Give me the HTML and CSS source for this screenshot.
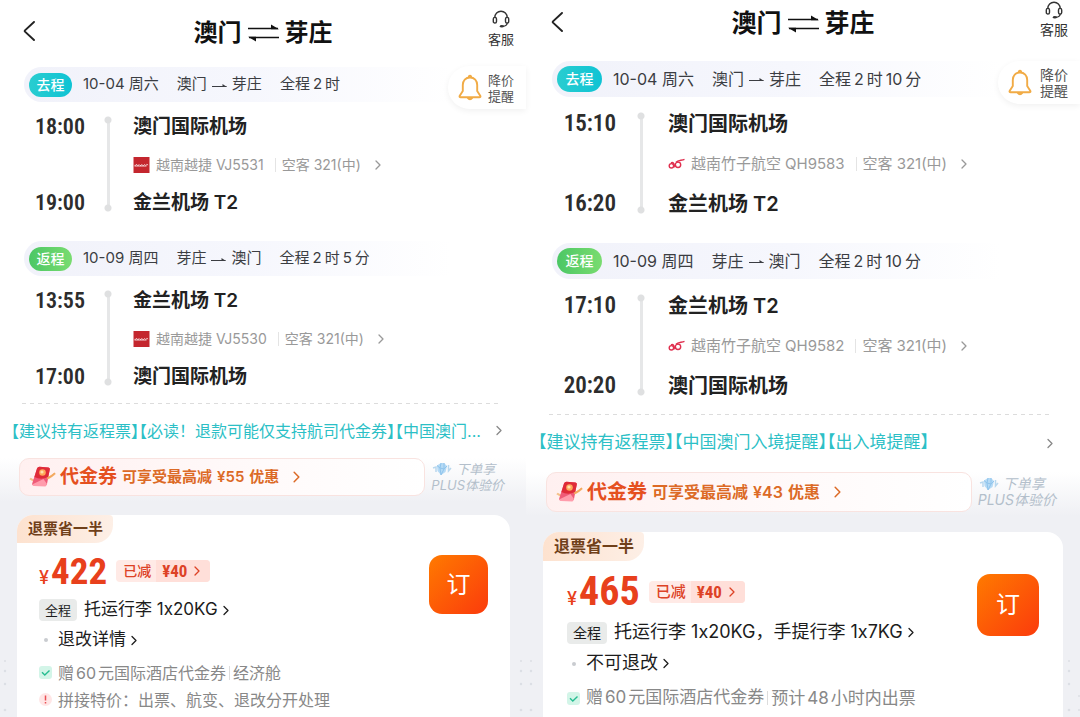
FILE: index.html
```html
<!DOCTYPE html>
<html lang="zh-CN">
<head>
<meta charset="utf-8">
<meta name="viewport" content="width=device-width, initial-scale=1">
<title>澳门 ⇌ 芽庄</title>
<link rel="stylesheet" href="styles.css">
</head>
<body>
<svg class="symbols" aria-hidden="true">
  <symbol id="back" viewBox="0 0 12 20"><path d="M11 1 2 9.300Q1.400 10 2 10.700L11 19" fill="none" stroke="currentColor" stroke-width="1.900" stroke-linecap="round"/></symbol>
  <symbol id="chev" viewBox="0 0 6 10"><path d="M1 1l4 4-4 4" fill="none" stroke="currentColor" stroke-width="1.300" stroke-linecap="round" stroke-linejoin="round"/></symbol>
  <symbol id="swap" viewBox="0 0 31 18"><path d="M0 4.500H30M1 13.500H31" fill="none" stroke="currentColor" stroke-width="1.700"/><path d="M23 .5 31 5.300H23ZM8 17.500 0 12.700H8Z" fill="currentColor"/></symbol>
  <symbol id="arrow" viewBox="0 0 15 6"><path d="M0 4.500H14.500" stroke="currentColor" stroke-width="1"/><path d="M10.500 2 15 5H10.500Z" fill="currentColor"/></symbol>
  <symbol id="headset" viewBox="0 0 18 18"><g fill="none" stroke="currentColor" stroke-width="1.400"><path d="M2.800 7.600V7.500a6.200 6.200 0 0 1 12.400 0v.1"/><rect x="1.300" y="7.400" width="3.200" height="5.600" rx="1.600"/><rect x="13.500" y="7.400" width="3.200" height="5.600" rx="1.600"/><path d="M15.200 13c-.3 2-1.900 3.200-4.200 3.300"/></g><ellipse cx="9.800" cy="16.200" rx="2" ry="1.300" fill="currentColor"/></symbol>
  <symbol id="bell" viewBox="0 0 24 26"><g fill="none" stroke="#f1ab45" stroke-width="1.900" stroke-linejoin="round"><path d="M12 3C7.600 3 4.800 6.200 4.800 10.500V16.500L1.600 21.500Q1.200 22.800 2.600 22.800H21.400Q22.800 22.800 22.400 21.500L19.200 16.500V10.500C19.200 6.200 16.400 3 12 3Z"/><path d="M9.600 23.200q2.400 3 4.800 0M10.800 3q0-1.800 1.200-1.800T13.200 3"/></g></symbol>
  <symbol id="vietjet" viewBox="0 0 16 16"><path d="M0 0h16v16H0z" fill="#c4262e"/><path d="M1 8.300h1.500l.6-1 .7 1.200h1.200l.5-1 1 1h1.200l.6-1.100.8 1.100h1.200l.7-1 .8.800h1l.5-1 1.300.7M1 9.100h12" stroke="#fff" stroke-width=".8" fill="none" opacity=".85"/></symbol>
  <symbol id="bamboo" viewBox="0 0 17 12"><g fill="none" stroke="#e0304f" stroke-width="1.400"><circle cx="3.400" cy="7.800" r="2.200"/><circle cx="10" cy="6.800" r="2.700"/><path d="M3 4.800C6 3 7 8.500 5.800 9.400M8 4.200C10 2.200 13 2.600 16.500 1.400M4.800 5.400q1.800 2 3.200 3"/></g></symbol>
  <symbol id="gift" viewBox="0 0 27 22"><path d="M1 12.500C7 18 20 13 26 7.500" fill="none" stroke="#f5c08a" stroke-width="2"/><path d="M8 2.500Q8.600.8 10.500.8L19.500 1.500Q21.300 1.800 20.800 3.600L18 18Q17.600 20 15.500 20L4.500 19.500Q2.500 19.300 3.200 17.500Z" fill="#ef5b78"/><path d="M8 2.500Q8.600.8 10.500.8L19.500 1.500Q21.300 1.800 20.800 3.600L19.200 11Q12 14.500 5.400 11Z" fill="#df2b38"/><circle cx="13.500" cy="6.500" r="3.300" fill="#ffa95a"/><circle cx="13" cy="6" r="1.600" fill="#ffe2b0"/><path d="M3 18.500 14.500 13l3.500 5-1.500 2.500L5 20Z" fill="#ff9cac"/><path d="M18 12.500q5-2 8-5.500" fill="none" stroke="#f3a85e" stroke-width="1.600"/></symbol>
  <symbol id="gem" viewBox="0 0 20 14"><path d="M5 3.500 9 1h3l3 3-1.500 6L9 13 5.500 9Z" fill="#b5daf5"/><path d="M9 1 8 6l1 7 3-6V1M5 3.500 8 6l4 1 3-3" fill="none" stroke="#8fc4ec"/><path d="M1 6l3-1v5M16.500 3v6l2.500-3" fill="none" stroke="#b9d8ee" stroke-width="1.500"/></symbol>
  <symbol id="check" viewBox="0 0 13 13"><rect width="13" height="13" rx="3" fill="#d3f5e8"/><path d="M3 6.300 5.800 9 10.500 4.500" fill="none" stroke="#27bd91" stroke-width="1.400"/></symbol>
  <symbol id="warn" viewBox="0 0 13 13"><circle cx="6.500" cy="6.500" r="6.500" fill="#ffe6e6"/><path d="M6.500 2.500v5M6.500 9v1.500" stroke="#e94f54" stroke-width="1.500"/></symbol>
  <symbol id="dots" viewBox="0 0 16 60"><g fill="#dcdfe5"><circle cx="5" cy="4" r="1"/><circle cx="5" cy="14" r="1.200"/><circle cx="5" cy="27" r="1.200"/><circle cx="15" cy="39" r="1"/><circle cx="5" cy="53" r="1.300"/><circle cx="15" cy="53" r="1"/></g></symbol>
</svg>

<main class="compare">
  <section class="pane pane-a">
    <header class="top">
      <button class="back" aria-label="返回"><svg><use href="#back"/></svg></button>
      <h1 class="title">澳门<svg><use href="#swap"/></svg>芽庄</h1>
      <button class="service"><svg><use href="#headset"/></svg><span>客服</span></button>
    </header>
    <button class="remind"><svg><use href="#bell"/></svg><span>降价<br>提醒</span></button>

    <div class="bar"><b class="pill go">去程</b><span>10-04 周六</span><span class="od">澳门<svg><use href="#arrow"/></svg>芽庄</span><span>全程<i class="num">2</i>时</span></div>
    <div class="route">
      <time class="time">18:00</time><div class="rail"></div><div class="port">澳门国际机场</div>
      <a class="flight" href="#"><svg class="logo"><use href="#vietjet"/></svg><span>越南越捷<i class="num">VJ5531</i></span><span class="plane">空客<i class="num">321(中)</i></span><svg class="chev"><use href="#chev"/></svg></a>
      <time class="time">19:00</time><div class="port">金兰机场 T2</div>
    </div>

    <div class="bar"><b class="pill return">返程</b><span>10-09 周四</span><span class="od">芽庄<svg><use href="#arrow"/></svg>澳门</span><span>全程<i class="num">2</i>时<i class="num">5</i>分</span></div>
    <div class="route last">
      <time class="time">13:55</time><div class="rail"></div><div class="port">金兰机场 T2</div>
      <a class="flight" href="#"><svg class="logo"><use href="#vietjet"/></svg><span>越南越捷<i class="num">VJ5530</i></span><span class="plane">空客<i class="num">321(中)</i></span><svg class="chev"><use href="#chev"/></svg></a>
      <time class="time">17:00</time><div class="port">澳门国际机场</div>
    </div>

    <a class="notice" href="#"><span><i>【</i>建议持有返程票<i>】【</i>必读！退款可能仅支持航司代金券<i>】【</i>中国澳门...</span><svg class="chev"><use href="#chev"/></svg></a>

    <div class="offers">
      <div class="promo">
        <a class="voucher" href="#"><svg class="gift"><use href="#gift"/></svg><strong>代金券</strong><span>可享受最高减<i class="num">¥55</i>优惠</span><svg class="chev"><use href="#chev"/></svg></a>
        <p class="plus"><span class="plus-top"><svg><use href="#gem"/></svg>下单享</span><span>PLUS体验价</span></p>
      </div>
      <article class="card">
        <span class="tag">退票省一半</span>
        <div class="body">
          <div class="detail">
            <div class="price-row"><span class="price"><small>¥</small>422</span><button class="cut"><span>已减</span><b>¥40<svg class="chev"><use href="#chev"/></svg></b></button></div>
            <a class="line" href="#"><span class="chip">全程</span>托运行李 1x20KG<svg class="chev"><use href="#chev"/></svg></a>
            <a class="line" href="#"><span class="dot"></span>退改详情<svg class="chev"><use href="#chev"/></svg></a>
            <ul class="notes">
              <li><svg><use href="#check"/></svg><span>赠<i class="num">60</i>元国际酒店代金券</span><span class="sep">经济舱</span></li>
              <li><svg><use href="#warn"/></svg><span>拼接特价：出票、航变、退改分开处理</span></li>
            </ul>
          </div>
          <button class="book">订</button>
        </div>
      </article>
      <svg class="dots dots-l" aria-hidden="true"><use href="#dots"/></svg>
      <svg class="dots dots-r" aria-hidden="true"><use href="#dots"/></svg>
    </div>
  </section>

  <section class="pane pane-b">
    <header class="top">
      <button class="back" aria-label="返回"><svg><use href="#back"/></svg></button>
      <h1 class="title">澳门<svg><use href="#swap"/></svg>芽庄</h1>
      <button class="service"><svg><use href="#headset"/></svg><span>客服</span></button>
    </header>
    <button class="remind"><svg><use href="#bell"/></svg><span>降价<br>提醒</span></button>

    <div class="bar"><b class="pill go">去程</b><span>10-04 周六</span><span class="od">澳门<svg><use href="#arrow"/></svg>芽庄</span><span>全程<i class="num">2</i>时<i class="num">10</i>分</span></div>
    <div class="route">
      <time class="time">15:10</time><div class="rail"></div><div class="port">澳门国际机场</div>
      <a class="flight" href="#"><svg class="logo"><use href="#bamboo"/></svg><span>越南竹子航空<i class="num">QH9583</i></span><span class="plane">空客<i class="num">321(中)</i></span><svg class="chev"><use href="#chev"/></svg></a>
      <time class="time">16:20</time><div class="port">金兰机场 T2</div>
    </div>

    <div class="bar"><b class="pill return">返程</b><span>10-09 周四</span><span class="od">芽庄<svg><use href="#arrow"/></svg>澳门</span><span>全程<i class="num">2</i>时<i class="num">10</i>分</span></div>
    <div class="route last">
      <time class="time">17:10</time><div class="rail"></div><div class="port">金兰机场 T2</div>
      <a class="flight" href="#"><svg class="logo"><use href="#bamboo"/></svg><span>越南竹子航空<i class="num">QH9582</i></span><span class="plane">空客<i class="num">321(中)</i></span><svg class="chev"><use href="#chev"/></svg></a>
      <time class="time">20:20</time><div class="port">澳门国际机场</div>
    </div>

    <a class="notice" href="#"><span><i>【</i>建议持有返程票<i>】【</i>中国澳门入境提醒<i>】【</i>出入境提醒<i>】</i></span><svg class="chev"><use href="#chev"/></svg></a>

    <div class="offers">
      <div class="promo">
        <a class="voucher" href="#"><svg class="gift"><use href="#gift"/></svg><strong>代金券</strong><span>可享受最高减<i class="num">¥43</i>优惠</span><svg class="chev"><use href="#chev"/></svg></a>
        <p class="plus"><span class="plus-top"><svg><use href="#gem"/></svg>下单享</span><span>PLUS体验价</span></p>
      </div>
      <article class="card">
        <span class="tag">退票省一半</span>
        <div class="body">
          <div class="detail">
            <div class="price-row"><span class="price"><small>¥</small>465</span><button class="cut"><span>已减</span><b>¥40<svg class="chev"><use href="#chev"/></svg></b></button></div>
            <a class="line" href="#"><span class="chip">全程</span>托运行李 1x20KG，手提行李 1x7KG<svg class="chev"><use href="#chev"/></svg></a>
            <a class="line" href="#"><span class="dot"></span>不可退改<svg class="chev"><use href="#chev"/></svg></a>
            <ul class="notes">
              <li><svg><use href="#check"/></svg><span>赠<i class="num">60</i>元国际酒店代金券</span><span class="sep">预计<i class="num">48</i>小时内出票</span></li>
            </ul>
          </div>
          <button class="book">订</button>
        </div>
      </article>
      <svg class="dots dots-l" aria-hidden="true"><use href="#dots"/></svg>
      <svg class="dots dots-r" aria-hidden="true"><use href="#dots"/></svg>
    </div>
  </section>
</main>
</body>
</html>
```

FILE: styles.css
```css
* { box-sizing: border-box; }
body {
  margin: 0;
  background: #fff;
  color: #222;
  font-family: Inter, "Noto Sans CJK SC", sans-serif;
  line-height: 1.25;
}
h1, p, ul { margin: 0; padding: 0; }
ul { list-style: none; }
a { color: inherit; text-decoration: none; }
i { font-style: normal; }
button { margin: 0; padding: 0; border: 0; background: none; color: inherit; font: inherit; cursor: pointer; }
svg { display: block; flex: none; }
.symbols { position: absolute; width: 0; height: 0; }

.compare {
  display: grid;
  grid-template-columns: minmax(0, 526fr) minmax(0, 554fr);
  min-height: 100vh;
}

.pane {
  position: relative;
  display: flex;
  flex-direction: column;
  white-space: nowrap;
}
.pane-a {
  --top-pad: 9px; --top-h: 67px; --back-x: 11px; --title: 24px;
  --remind-y: 66px; --remind-w: 78px; --remind-gap: 6px; --small: 13px;
  --bar-h: 35px; --bar-x: 24px; --bar-font: 15px; --bar-gap: 18px; --pill-w: 43px; --pill-h: 24px;
  --row: 38px; --route-pad: 6px; --last-pad: 7px; --time-w: 85px; --rail-w: 46px;
  --time: 22px; --port: 19px; --flight: 14px;
  --dash-l: 22px; --dash-r: 24px; --notice-h: 55px; --notice: 16px;
  --promo-l: 19px; --promo-r: 22px; --promo-h: 38px; --voucher: 15px; --strong: 19px;
  --card-gap: 19px; --card-r: 16px; --inset: 22px; --tag-h: 28px; --tag: 15px;
  --price-top: 8px; --price-h: 40px; --price: 37px; --line-h: 30px; --line: 17px;
  --notes-top: 4px; --note-h: 27px; --note: 16px; --book: 59px; --book-top: 12px; --cut: 14px;
}
.pane-b {
  --top-pad: 0px; --top-h: 61px; --back-x: 13px; --title: 25px;
  --remind-y: 61px; --remind-w: 82px; --remind-gap: 8px; --small: 14px;
  --bar-h: 36px; --bar-x: 26px; --bar-font: 16px; --bar-gap: 18px; --pill-w: 45px; --pill-h: 26px;
  --row: 40px; --route-pad: 7px; --last-pad: 8px; --time-w: 90px; --rail-w: 50px;
  --time: 23px; --port: 20px; --flight: 15px;
  --dash-l: 23px; --dash-r: 27px; --notice-h: 58px; --notice: 17px;
  --promo-l: 20px; --promo-r: 24px; --promo-h: 40px; --voucher: 16px; --strong: 20px;
  --card-gap: 20px; --card-r: 17px; --inset: 24px; --tag-h: 29px; --tag: 16px;
  --price-top: 10px; --price-h: 42px; --price: 40px; --line-h: 31px; --line: 18px;
  --notes-top: 5px; --note-h: 28px; --note: 17px; --book: 62px; --book-top: 13px; --cut: 15px;
}

.num { margin: 0 3px; }

.top {
  display: grid;
  grid-template-columns: 1fr auto 1fr;
  align-items: start;
  height: var(--top-h);
  padding: var(--top-pad) 12px 0;
}
.back { justify-self: start; height: 44px; margin-left: var(--back-x); }
.back svg { width: 12px; height: 20px; }
.title {
  display: flex;
  align-items: center;
  gap: 6px;
  height: 48px;
  color: #111;
  font-size: var(--title);
  font-weight: 700;
}
.title svg { width: 31px; height: 18px; }
.service {
  justify-self: end;
  display: flex;
  flex-direction: column;
  align-items: center;
  font-size: var(--small);
  line-height: 20px;
  color: #333;
}
.service svg { width: 18px; height: 20px; }

.remind {
  position: absolute;
  top: var(--remind-y);
  right: 0;
  display: flex;
  align-items: center;
  gap: var(--remind-gap);
  width: var(--remind-w);
  height: 43px;
  padding-left: 10px;
  border-radius: 22px 0 0 22px;
  background: #fff;
  box-shadow: 0 2px 6px #0000000f;
  color: #555;
  font-size: var(--small);
  line-height: 16px;
  text-align: left;
}
.remind svg { width: 24px; height: 27px; }

.bar {
  display: flex;
  align-items: center;
  gap: var(--bar-gap);
  height: var(--bar-h);
  margin-left: var(--bar-x);
  padding-left: 5px;
  border-radius: 18px 0 0 18px;
  background: linear-gradient(90deg, #f1f2fa, #f6f7fd 45%, #fff 85%);
  color: #3b3d42;
  font-size: var(--bar-font);
}
.pill {
  width: var(--pill-w);
  height: var(--pill-h);
  margin-right: -7px;
  border-radius: 13px;
  color: #fff;
  font-size: 14px;
  font-weight: 500;
  line-height: var(--pill-h);
  text-align: center;
}
.go { background: linear-gradient(90deg, #29cdd0, #0fc3d4); }
.return { background: linear-gradient(90deg, #4cc765, #79dc70); }
.od { display: flex; align-items: center; gap: 5px; }
.od svg { width: 15px; height: 6px; }

.route {
  display: grid;
  grid-template-columns: var(--time-w) var(--rail-w) 1fr;
  grid-template-rows: repeat(3, var(--row));
  align-items: center;
  padding: var(--route-pad) 0 19px;
}
.route.last { padding-bottom: var(--last-pad); }
.time {
  grid-column: 1;
  color: #2d2d2d;
  font-family: "Roboto Condensed", Roboto, sans-serif;
  font-size: var(--time);
  font-weight: 600;
  text-align: right;
}
.rail {
  grid-column: 2;
  grid-row: 1 / 4;
  align-self: stretch;
  justify-self: center;
  width: 8px;
  margin: 8px 0 10px;
  background:
    radial-gradient(circle at 4px 4px, #dfe0e1 3px, #dfe0e100 4px) top / 8px 8px no-repeat,
    radial-gradient(circle at 4px 4px, #dfe0e1 3px, #dfe0e100 4px) bottom / 8px 8px no-repeat,
    linear-gradient(#e6e7e8, #e6e7e8) center / 3px 88% no-repeat;
}
.port { grid-column: 3; color: #222; font-size: var(--port); font-weight: 600; padding-left: 2px; }
.flight {
  grid-column: 3;
  display: flex;
  align-items: center;
  gap: 6px;
  padding-left: 2px;
  color: #999;
  font-size: var(--flight);
}
.logo { width: 17px; height: 16px; }
.flight .num { margin: 0 2px 0 4px; }
.plane { border-left: 1px solid #e4e4e4; margin-left: 3px; padding-left: 6px; line-height: 14px; }
.flight .chev { margin-left: 6px; }
.chev { width: 6px; height: 10px; }

.notice {
  display: flex;
  align-items: center;
  justify-content: space-between;
  height: var(--notice-h);
  margin: 0 var(--dash-r) 0 var(--dash-l);
  background: repeating-linear-gradient(90deg, #dcdcdc 0 4px, #fff 4px 8px) top / 100% 1px no-repeat;
  color: #2cbfc6;
  font-size: var(--notice);
}
.notice span { margin-left: -11px; text-spacing-trim: space-all; }
.notice i { font-feature-settings: "halt"; }
.notice .chev { color: #888; width: 6px; height: 11px; }

.offers {
  position: relative;
  flex: 1;
  display: flex;
  flex-direction: column;
  background: linear-gradient(#fff, #eff0f4 44px);
}
.promo {
  display: flex;
  align-items: center;
  gap: 6px;
  height: var(--promo-h);
  padding: 0 var(--promo-r) 0 var(--promo-l);
}
.voucher {
  flex: 1;
  display: flex;
  align-items: center;
  height: 100%;
  padding-left: 9px;
  border: 1px solid #f9e3e0;
  border-radius: 10px;
  background: linear-gradient(90deg, #fff0f0, #fffafa 60%, #fff);
  color: #dc6a26;
  font-size: var(--voucher);
  font-weight: 600;
}
.gift { width: 27px; height: 22px; }
.voucher strong { margin: 0 5px 0 4px; color: #e5501f; font-size: var(--strong); font-weight: 700; }
.voucher .num { margin: 0 5px; }
.voucher .chev { width: 7px; height: 12px; margin-left: 14px; }
.plus {
  display: flex;
  flex-direction: column;
  color: #b3bfcb;
  font-size: var(--small);
  font-style: italic;
  line-height: 16px;
}
.plus-top { display: flex; align-items: center; gap: 3px; }
.plus-top svg { width: 22px; height: 14px; }

.card {
  flex: 1;
  margin: var(--card-gap) var(--card-r) 0 17px;
  border-radius: 16px 16px 0 0;
  background: #fff;
}
.tag {
  display: block;
  width: fit-content;
  height: var(--tag-h);
  padding: 0 10px 0 11px;
  border-radius: 16px 4px 18px 0;
  background: linear-gradient(90deg, #fde2cf, #fdefe6);
  color: #70401a;
  font-size: var(--tag);
  font-weight: 700;
  line-height: var(--tag-h);
}
.body { display: flex; padding: 0 var(--inset); }
.detail { flex: 1; min-width: 0; }
.price-row {
  display: flex;
  align-items: center;
  gap: 9px;
  height: var(--price-h);
  margin: var(--price-top) 0 4px;
}
.price {
  color: #e8401c;
  font-family: "Roboto Condensed", Roboto, sans-serif;
  font-size: var(--price);
  font-weight: 700;
  line-height: 1;
}
.price small { margin-right: 2px; font-family: Inter, sans-serif; font-size: 18px; font-weight: 500; }
.cut {
  display: flex;
  height: 22px;
  border-radius: 4px;
  overflow: hidden;
  background: #ffeae6;
  color: #dd4226;
  font-size: var(--cut);
  line-height: 22px;
}
.cut span { padding: 0 5px 0 7px; font-weight: 500; }
.cut b {
  display: flex;
  align-items: center;
  gap: 7px;
  padding: 0 10px 0 6px;
  background: #ffdfd9;
  font-family: "Roboto Condensed", Roboto, sans-serif;
  font-size: 17px;
}
.line {
  display: flex;
  align-items: center;
  height: var(--line-h);
  color: #1c1c1c;
  font-size: var(--line);
}
.line .chev { margin-left: 5px; height: 11px; }
.chip {
  margin-right: 7px;
  padding: 0 6px;
  border-radius: 4px;
  background: #e9ebea;
  font-size: var(--small);
  line-height: 22px;
}
.dot { width: 4px; height: 4px; margin: 0 10px 0 5px; border-radius: 50%; background: #c9ccd0; }
.notes { margin-top: var(--notes-top); color: #888; font-size: var(--note); }
.notes li { display: flex; align-items: center; height: var(--note-h); }
.notes svg { width: 13px; height: 13px; margin-right: 6px; }
.notes .num { margin: 0 2px; }
.sep { margin-left: 3px; padding-left: 3px; border-left: 1px solid #ddd; line-height: 14px; }
.book {
  width: var(--book);
  height: var(--book);
  margin-top: var(--book-top);
  border-radius: 13px;
  background: linear-gradient(135deg, #ff7a00, #fb3b0c);
  color: #fff;
  font-size: 24px;
}

.dots { position: absolute; bottom: 0; width: 16px; height: 60px; }
.dots-l { left: 0; clip-path: inset(0 4px 0 0); }
.dots-r { right: -6px; }
.pane-b .dots-r { right: 0; }
```
